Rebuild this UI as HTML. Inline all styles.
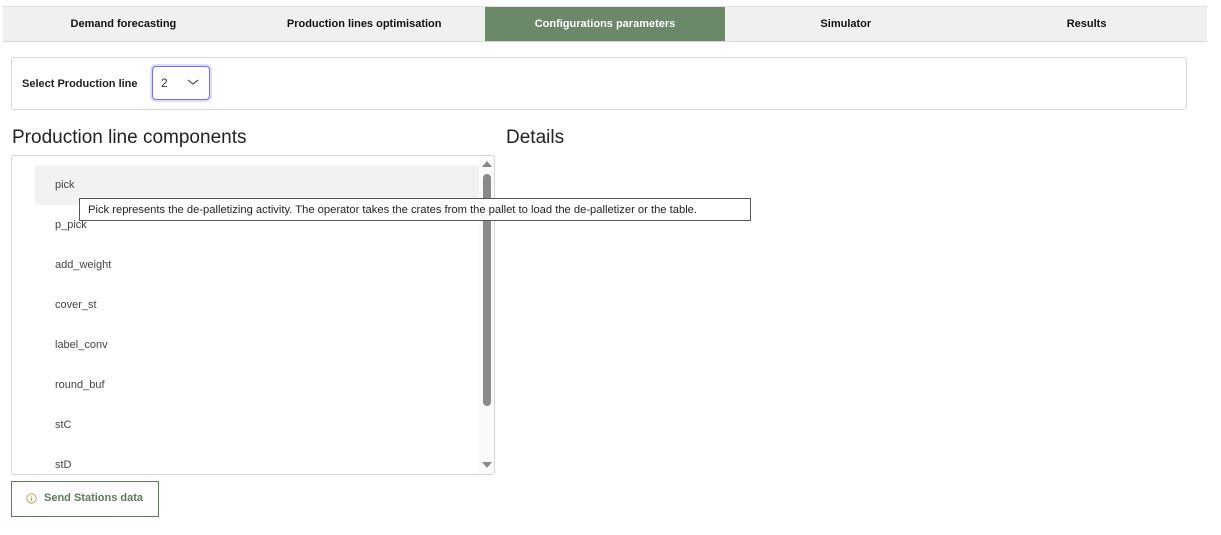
<!DOCTYPE html>
<html><head><style>
body{margin:0;width:1221px;height:535px;background:#fff;font-family:"Liberation Sans",sans-serif;position:relative;overflow:hidden}
.tabs{position:absolute;left:3px;top:6px;width:1204px;height:34px;background:#f0f0f0;border-top:1px solid #e0e0e0;border-bottom:1px solid #d8d8d8;display:flex}
.tab{width:240.8px;text-align:center;line-height:34px;font-size:11px;font-weight:bold;color:#111}
.tab.on{background:#6b8868;color:#fff}
.box{position:absolute;left:11px;top:57px;width:1174px;height:51px;border:1px solid #d6d6d6;border-radius:3px}
.lbl{position:absolute;left:10px;top:20px;font-size:11px;font-weight:bold;color:#222}
.sel{position:absolute;left:140px;top:8px;width:56px;height:32px;border:1.5px solid #6f6ff0;border-radius:4px;box-shadow:0 0 0 2px #dcdcfb}
.sel span{position:absolute;left:8px;top:9px;font-size:12px;color:#333}
h2{position:absolute;margin:0;font-weight:normal;font-size:19px;color:#222;top:127px}
.list{position:absolute;left:11px;top:155px;width:482px;height:318px;border:1px solid #d6d6d6;border-radius:3px;overflow:hidden}
.item{position:absolute;left:43px;font-size:11px;color:#444}
.hl{position:absolute;left:23px;top:9px;width:445px;height:40px;background:#f2f2f3}
.sb{position:absolute;right:0;top:0;width:15px;height:318px;background:#fafafa}
.thumb{position:absolute;left:4px;top:18px;width:8px;height:232px;background:#8a8a8a;border-radius:4px}
.tip{position:absolute;left:79px;top:198px;width:672px;height:23px;border:1px solid #555;background:#fff;font-size:11.2px;line-height:22px;color:#222;padding-left:8px;box-sizing:border-box}
.btn{position:absolute;left:11px;top:481px;width:148px;height:36px;border:1px solid #5d7a5a;box-sizing:border-box;font-size:11px;font-weight:bold;color:#5d7a5a;line-height:33px}
</style></head><body>
<div class="tabs"><div class="tab">Demand forecasting</div><div class="tab">Production lines optimisation</div><div class="tab on">Configurations parameters</div><div class="tab">Simulator</div><div class="tab">Results</div></div>
<div class="box"><div class="lbl">Select Production line</div><div class="sel"><span>2</span><svg style="position:absolute;left:34px;top:11px" width="12" height="8"><path d="M1 2l5 4 5-4" fill="none" stroke="#555" stroke-width="1.2"/></svg></div></div>
<h2 style="left:12px">Production line components</h2>
<h2 style="left:506px">Details</h2>
<div class="list"><div class="hl"></div>
<div class="item" style="top:23px">pick</div>
<div class="item" style="top:63px">p_pick</div>
<div class="item" style="top:103px">add_weight</div>
<div class="item" style="top:143px">cover_st</div>
<div class="item" style="top:183px">label_conv</div>
<div class="item" style="top:223px">round_buf</div>
<div class="item" style="top:263px">stC</div>
<div class="item" style="top:303px">stD</div>
<div class="sb"><svg style="position:absolute;left:3px;top:4px" width="10" height="7"><path d="M0 7L5 1 10 7z" fill="#888"/></svg><div class="thumb"></div><svg style="position:absolute;left:3px;top:306px" width="10" height="7"><path d="M0 0L5 6 10 0z" fill="#888"/></svg></div>
</div>
<div class="tip">Pick represents the de-palletizing activity. The operator takes the crates from the pallet to load the de-palletizer or the table.</div>
<div class="btn"><svg style="position:absolute;left:14px;top:11px" width="11" height="11"><circle cx="5.5" cy="5.5" r="4.7" fill="none" stroke="#b9a25a" stroke-width="1"/><path d="M5.5 4.5v3.5M5.5 2.8v.8" stroke="#b9a25a" stroke-width="1"/></svg><span style="position:absolute;left:32px">Send Stations data</span></div>
</body></html>
